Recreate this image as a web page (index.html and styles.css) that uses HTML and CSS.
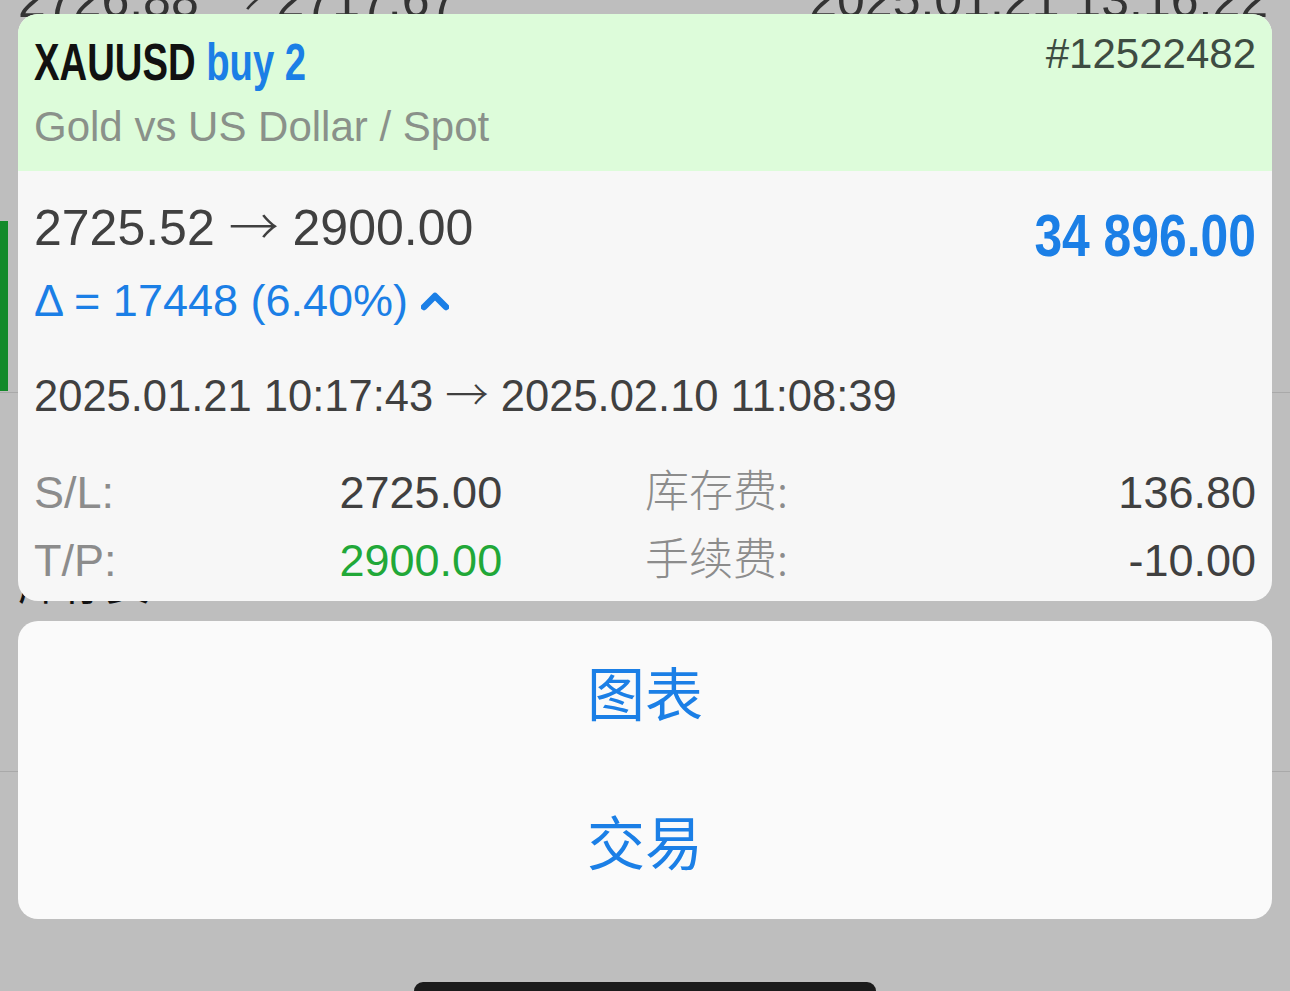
FILE: index.html
```html
<!DOCTYPE html>
<html lang="zh">
<head>
    <meta charset="UTF-8">
    <meta name="viewport" content="width=device-width, initial-scale=1.0">
    <title>XAUUSD buy 2</title>
    <link rel="stylesheet" href="styles.css">
</head>
<body>
    <!-- dimmed history list behind the sheet -->
    <div class="backdrop">
        <div class="bg-row bg-first">
            <div class="bg-top">
                <span>2726.88 <span class="arrow">→</span> 2717.67</span>
                <span>2025.01.21 13:16:22</span>
            </div>
            <div class="bg-mark"></div>
        </div>
        <div class="bg-row bg-second">
            <div class="bg-label">库存费</div>
        </div>
    </div>

    <div class="sheet">
        <div class="card">
            <div class="card-head">
                <div class="title-row">
                    <div class="title">XAUUSD <span class="side">buy 2</span></div>
                    <div class="ticket">#12522482</div>
                </div>
                <div class="subtitle">Gold vs US Dollar / Spot</div>
            </div>
            <div class="card-body">
                <div class="price-row">
                    <div>
                        <div class="price">2725.52 <span class="arrow">→</span> 2900.00</div>
                        <div class="delta">
                            <span>Δ = 17448 (6.40%)</span>
                            <svg class="chevron" width="28" height="20" viewBox="0 0 28 20">
                                <polyline points="3,16 14,5 25,16" fill="none" stroke="#1b7fe6" stroke-width="6.5" stroke-linecap="round" stroke-linejoin="round"/>
                            </svg>
                        </div>
                    </div>
                    <div class="profit">34 896.00</div>
                </div>
                <div class="dates">2025.01.21 10:17:43 <span class="arrow">→</span> 2025.02.10 11:08:39</div>
                <div class="stats">
                    <div class="label">S/L:</div>
                    <div class="val">2725.00</div>
                    <div class="label cjk">库存费:</div>
                    <div class="val right">136.80</div>
                    <div class="label">T/P:</div>
                    <div class="val green">2900.00</div>
                    <div class="label cjk">手续费:</div>
                    <div class="val right">-10.00</div>
                </div>
            </div>
        </div>

        <div class="actions">
            <div class="action">图表</div>
            <div class="action">交易</div>
        </div>
    </div>

    <div class="home-bar"></div>
</body>
</html>
```

FILE: styles.css
```css
/* page */
body {
    margin: 0;
    height: 991px;
    overflow: hidden;
    position: relative;
    background-color: #bebebe;
    font-family: "Liberation Sans", Arial, "Noto Sans CJK SC", sans-serif;
}

/* long arrow taken from the CJK font, kept out of the line height */
.arrow {
    font-family: "Noto Sans CJK SC", sans-serif;
    font-weight: 300;
    line-height: 0;
}

/* background list */
.bg-row {
    display: flex;
    flex-direction: column;
    box-sizing: border-box;
    border-bottom: 1px solid #a9a9a9;
}

.bg-first {
    height: 393px;
}

.bg-second {
    height: 379px;
}

.bg-top {
    display: flex;
    justify-content: space-between;
    margin: -30px 22px 0 18px;
    font-size: 50px;
    line-height: 60px;
    color: #333;
}

.bg-mark {
    width: 8px;
    height: 170px;
    margin-top: 191px;
    background-color: #138a2a;
}

.bg-label {
    margin: 162px 0 0 18px;
    font-family: "Noto Sans CJK SC", sans-serif;
    font-size: 44px;
    line-height: 52px;
    color: #111;
}

/* sheet with the card and the actions */
.sheet {
    position: absolute;
    top: 14px;
    left: 18px;
    right: 18px;
    display: flex;
    flex-direction: column;
    gap: 20px;
}

.card {
    background-color: #f7f7f7;
    border-radius: 20px;
    overflow: hidden;
}

.card-head {
    background-color: #ddfcda;
    padding: 19px 16px 20px;
}

.title-row {
    display: flex;
    justify-content: space-between;
    align-items: flex-start;
}

.title {
    display: inline-block;
    transform: scaleX(0.75);
    transform-origin: left center;
    font-weight: bold;
    font-size: 51px;
    line-height: 60px;
    color: #111;
}

.side {
    color: #1b7fe6;
}

.ticket {
    margin-top: -3px;
    font-size: 42px;
    line-height: 48px;
    color: #3e4c42;
}

.subtitle {
    margin-top: 10px;
    font-size: 42px;
    line-height: 48px;
    color: #8a918a;
}

.card-body {
    padding: 27px 16px 6px;
}

.price-row {
    display: flex;
    justify-content: space-between;
    align-items: flex-start;
}

.price {
    font-size: 50px;
    line-height: 60px;
    color: #404040;
}

.delta {
    display: flex;
    align-items: center;
    gap: 13px;
    margin-top: 18px;
    font-size: 45px;
    line-height: 50px;
    color: #1b7fe6;
}

.profit {
    display: inline-block;
    transform: scaleX(0.83);
    transform-origin: right center;
    margin-top: 8px;
    font-weight: bold;
    font-size: 60px;
    line-height: 60px;
    color: #1b7fe6;
}

.dates {
    margin-top: 44px;
    font-size: 43.5px;
    line-height: 52px;
    color: #404040;
}

.stats {
    display: grid;
    grid-template-columns: repeat(4, 1fr);
    grid-auto-rows: 68px;
    align-items: center;
    margin-top: 37px;
    font-size: 45px;
}

.label {
    color: #8c8c8c;
}

.cjk {
    margin-bottom: 10px;
    font-family: "Noto Sans CJK SC", sans-serif;
    font-weight: 300;
    font-size: 44px;
}

.val {
    color: #404040;
}

.right {
    text-align: right;
}

.green {
    color: #21a838;
}

/* actions */
.actions {
    background-color: #fafafa;
    border-radius: 20px;
}

.action {
    height: 149px;
    line-height: 141px;
    text-align: center;
    font-family: "Noto Sans CJK SC", sans-serif;
    font-size: 58px;
    color: #1b7fe6;
}

.home-bar {
    position: absolute;
    left: 0;
    right: 0;
    bottom: -9px;
    width: 462px;
    height: 18px;
    margin: 0 auto;
    border-radius: 9px;
    background-color: #1b1b1b;
}
```
